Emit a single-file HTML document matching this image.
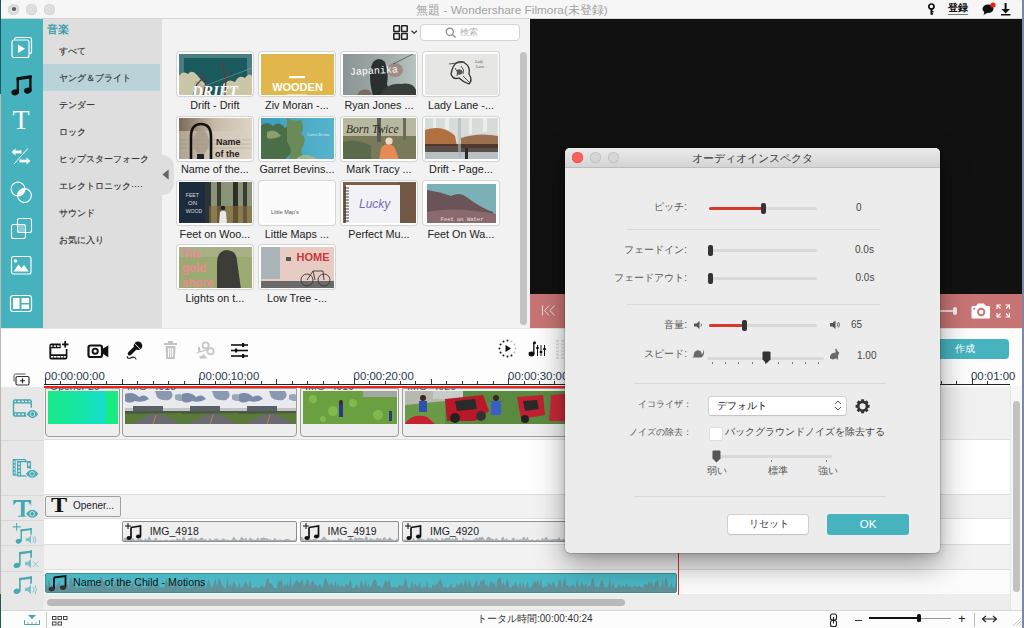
<!DOCTYPE html><html><head><meta charset="utf-8"><style>
*{box-sizing:border-box;margin:0;padding:0}
html,body{width:1024px;height:628px;overflow:hidden;background:#f0f0f0;font-family:"Liberation Sans",sans-serif}
.a{position:absolute}
svg{position:absolute;overflow:visible}
.cat{position:absolute;left:59px;font-size:9px;line-height:12px;color:#333;-webkit-text-stroke:0.15px #333;white-space:nowrap}
.th{position:absolute;width:76px;height:44px;border-radius:3px;background:#fff;box-shadow:0 0 0 1px #d4d4d4, 0 1px 1px rgba(0,0,0,0.08);overflow:hidden}
.th > div{position:absolute;left:1.5px;top:1.5px;width:73px;height:41px;overflow:hidden}
.lbl{position:absolute;width:82px;text-align:center;font-size:10.8px;line-height:12px;color:#222;white-space:nowrap}
.dl{position:absolute;font-size:10px;line-height:12px;color:#555;white-space:nowrap;text-align:right}
.dv{position:absolute;font-size:10px;line-height:12px;color:#444;white-space:nowrap}
.trk{position:absolute;left:44px;width:966px}
.hd{position:absolute;left:1px;width:43px;background:#e7e7e7}
.clip{position:absolute;background:#eeeeee;border:1px solid #9c9c9c;border-radius:0 0 4px 4px}
.aclip{position:absolute;background:#efefef;border:1px solid #8e8e8e;border-radius:2px;overflow:hidden}
.rl{position:absolute;top:371px;font-size:11.4px;line-height:11px;color:#2b3550;white-space:nowrap}
</style></head><body>
<div class="a" style="left:0;top:0;width:1px;height:94px;background:#1d5860"></div><div class="a" style="left:0;top:94px;width:1px;height:500px;background:#bdb8b4"></div><div class="a" style="left:0;top:594px;width:1px;height:34px;background:#1d5a50"></div>
<div class="a" style="left:1022px;top:0;width:2px;height:628px;background:#7e88a4"></div>
<div class="a" style="left:1px;top:0;width:1021px;height:19px;background:#f6f6f6;border-bottom:1px solid #d9d4d2;border-radius:5px 5px 0 0"></div>
<div class="a" style="left:8.0px;top:3.5px;width:11px;height:11px;border-radius:50%;background:#dedede;box-shadow:inset 0 0 0 0.6px #cfcfcf"></div>
<div class="a" style="left:26.0px;top:3.5px;width:11px;height:11px;border-radius:50%;background:#dedede;box-shadow:inset 0 0 0 0.6px #cfcfcf"></div>
<div class="a" style="left:44.0px;top:3.5px;width:11px;height:11px;border-radius:50%;background:#dedede;box-shadow:inset 0 0 0 0.6px #cfcfcf"></div>
<div class="a" style="left:11.5px;top:7px;width:4px;height:4px;border-radius:50%;background:#5a5a5a"></div>
<div class="a" style="left:312px;top:3.5px;width:400px;text-align:center;font-size:11.8px;line-height:13px;color:#a2a2a2">無題 - Wondershare Filmora(未登録)</div>
<svg style="left:926px;top:2px" width="12" height="14"><circle cx="5.4" cy="4.6" r="2.6" fill="none" stroke="#111" stroke-width="1.7"/><rect x="4.5" y="6.5" width="1.9" height="6.2" fill="#111"/><rect x="5" y="9" width="2.6" height="1.3" fill="#111"/><rect x="5" y="11.3" width="2.2" height="1.3" fill="#111"/></svg>
<div class="a" style="left:947.5px;top:2px;font-size:10px;line-height:11px;color:#111;font-weight:bold;border-bottom:1px solid #777;height:12.5px">登録</div>
<svg style="left:982px;top:3px" width="14" height="13"><ellipse cx="6" cy="5.8" rx="5.5" ry="4.3" fill="#111"/><path d="M2.5 8.5 L1.5 12 L6 9.5Z" fill="#111"/><circle cx="11" cy="2" r="2.6" fill="#f0201a"/></svg>
<svg style="left:1000px;top:2px" width="12" height="14"><rect x="4.6" y="1" width="2" height="7" fill="#111"/><path d="M1.5 7 L10 7 L5.6 11.5Z" fill="#111"/><rect x="1" y="12" width="9.5" height="1.5" fill="#111"/></svg>
<div class="a" style="left:1px;top:19px;width:42px;height:309px;background:#45b2be"></div>
<svg style="left:10px;top:36px" width="24" height="24"><rect x="4.5" y="1.5" width="17" height="16" rx="2" fill="none" stroke="#fff" stroke-width="1.2"/><rect x="2" y="4" width="17" height="17.5" rx="2" fill="#45b2be" stroke="#fff" stroke-width="1.2"/><path d="M8 8.5 L15 12.7 L8 17Z" fill="#fff"/></svg>
<svg style="left:10px;top:73px" width="24" height="24"><path d="M6.6 4.3 L21.6 2 L21.6 5.2 L6.6 7.5Z" fill="#111"/><rect x="6.6" y="5" width="2.4" height="14.5" fill="#111"/><rect x="19.2" y="3" width="2.4" height="14.5" fill="#111"/><ellipse cx="5.2" cy="19.3" rx="3.9" ry="3" transform="rotate(-15 5.2 19.3)" fill="#111"/><ellipse cx="17.8" cy="17.6" rx="3.9" ry="3" transform="rotate(-15 17.8 17.6)" fill="#111"/></svg>
<div class="a" style="left:10px;top:106px;width:22px;text-align:center;font-family:'Liberation Serif',serif;font-size:28px;line-height:28px;color:#fff">T</div>
<svg style="left:10px;top:146px" width="24" height="20"><path d="M1.5 6 L5.5 2.5 L5.5 4.8 L11.5 4.2 L11.5 7.6 L5.5 7.3 L5.5 9.5Z" fill="#fff"/><path d="M20.5 15 L16.5 18.5 L16.5 16.2 L9.5 16.6 L9.5 13.4 L16.5 13.7 L16.5 11.5Z" fill="#fff"/><line x1="4" y1="18" x2="18" y2="2.3" stroke="#fff" stroke-width="1"/></svg>
<svg style="left:9px;top:180px" width="26" height="24"><circle cx="9" cy="9" r="6.9" fill="none" stroke="#fff" stroke-width="1.1"/><circle cx="15.5" cy="15.5" r="6.9" fill="none" stroke="#fff" stroke-width="1.1"/><path d="M8.6 15.9 A6.9 6.9 0 0 1 15.9 8.6 A6.9 6.9 0 0 1 8.6 15.9Z" fill="#fff"/></svg>
<svg style="left:10px;top:217px" width="24" height="24"><rect x="7.5" y="1.5" width="14" height="14" rx="2" fill="none" stroke="#fff" stroke-width="1.1"/><rect x="1.5" y="7.5" width="14" height="14" rx="2" fill="none" stroke="#fff" stroke-width="1.1"/><rect x="7.5" y="7.5" width="8" height="8" fill="rgba(255,255,255,0.35)"/></svg>
<svg style="left:10px;top:255px" width="24" height="22"><rect x="1.5" y="1.5" width="19.5" height="17.5" rx="2" fill="none" stroke="#fff" stroke-width="1.2"/><circle cx="5.5" cy="6" r="1.7" fill="#fff"/><path d="M3.5 16.5 L8.5 9.5 L11.5 13 L14 10 L18.8 16.5Z" fill="#fff"/></svg>
<svg style="left:9px;top:294px" width="24" height="20"><rect x="1.5" y="1.5" width="21" height="16" rx="2.5" fill="none" stroke="#fff" stroke-width="1.2"/><rect x="4" y="4" width="6.5" height="11" fill="#fff"/><rect x="12.5" y="4" width="7.5" height="5" fill="#fff"/><rect x="12.5" y="10.5" width="7.5" height="4.5" fill="#fff"/></svg>
<div class="a" style="left:43px;top:19px;width:119px;height:309px;background:#dedede"></div>
<div class="a" style="left:43px;top:64px;width:117px;height:27px;background:#b9d3d8"></div>
<div class="a" style="left:47px;top:23px;font-size:10.5px;line-height:13px;color:#2e96a6;-webkit-text-stroke:0.3px #2e96a6">音楽</div>
<div class="cat" style="top:45px">すべて</div>
<div class="cat" style="top:72px">ヤング＆ブライト</div>
<div class="cat" style="top:99px">テンダー</div>
<div class="cat" style="top:126px">ロック</div>
<div class="cat" style="top:153px">ヒップスターフォーク</div>
<div class="cat" style="top:180px">エレクトロニック····</div>
<div class="cat" style="top:207px">サウンド</div>
<div class="cat" style="top:234px">お気に入り</div>
<div class="a" style="left:162px;top:19px;width:368px;height:309px;background:#f2f2f2"></div>
<div class="a" style="left:161px;top:155px;width:13px;height:40px;border-radius:0 12px 12px 0;background:#dedede"></div>
<svg style="left:162px;top:169px" width="8" height="12"><path d="M6.7 0.6 L0.4 5.6 L6.7 10.8Z" fill="#666"/></svg>
<svg style="left:392px;top:24px" width="28" height="18"><g fill="none" stroke="#222" stroke-width="1.5"><rect x="1.8" y="1.8" width="5.6" height="5.6" rx="0.5"/><rect x="9.6" y="1.8" width="5.6" height="5.6" rx="0.5"/><rect x="1.8" y="9.6" width="5.6" height="5.6" rx="0.5"/><rect x="9.6" y="9.6" width="5.6" height="5.6" rx="0.5"/></g><path d="M19.5 6.8 L22.2 9.3 L24.9 6.8" fill="none" stroke="#333" stroke-width="1.2"/></svg>
<div class="a" style="left:420px;top:24px;width:100px;height:17px;border-radius:4px;background:#fff;border:1px solid #d2d2d2"></div>
<svg style="left:445px;top:27px" width="12" height="12"><circle cx="4.8" cy="4.8" r="3.6" fill="none" stroke="#888" stroke-width="1.2"/><line x1="7.5" y1="7.5" x2="10.5" y2="10.5" stroke="#888" stroke-width="1.3"/></svg>
<div class="a" style="left:460px;top:27px;font-size:8.7px;line-height:11px;color:#b5b5b5">検索</div>
<div class="a" style="left:520px;top:52px;width:7px;height:273px;border-radius:4px;background:#c3c3c3"></div>
<div class="th" style="left:177.4px;top:52.3px"><div><svg width="73" height="42" style="left:0;top:0"><rect width="73" height="42" fill="#4a7f82"/><rect x="5" y="4" width="63" height="38" fill="#1b5a5f"/><path d="M0 22 Q4 16 9 20 Q13 15 18 21 Q22 26 26 30 L26 42 L0 42Z" fill="#c9c7a7"/><path d="M44 30 Q50 24 56 28 Q60 20 66 24 Q70 18 73 22 L73 42 L44 42Z" fill="#c9c7a7"/><path d="M16 26 Q24 30 28 36 L30 42 L14 42Z" fill="#b8b898"/><path d="M14 42 L18 30 L24 24 M24 42 L27 28 L22 18 M46 42 L47 26 L43 8 M47 28 L53 18" stroke="#5a3a3a" stroke-width="1.3" fill="none"/><line x1="20" y1="34" x2="73" y2="14" stroke="#8ab0b0" stroke-width="0.5"/><text x="36" y="41" text-anchor="middle" font-family="Liberation Serif" font-weight="bold" font-style="italic" font-size="15" fill="#fff" transform="scale(1,1.05)">DRIFT</text></svg></div></div>
<div class="lbl" style="left:173.9px;top:99.1px">Drift - Drift</div>
<div class="th" style="left:259.4px;top:52.3px"><div><svg width="73" height="42" style="left:0;top:0"><rect width="73" height="42" fill="#e1b74b"/><rect x="28" y="22" width="16" height="2.2" fill="#fff"/><text x="36.5" y="37" text-anchor="middle" font-family="Liberation Sans" font-weight="bold" font-size="11" fill="#fff">WOODEN</text><rect x="26" y="40" width="20" height="2" fill="#f4dca0"/></svg></div></div>
<div class="lbl" style="left:255.89999999999998px;top:99.1px">Ziv Moran -...</div>
<div class="th" style="left:341.4px;top:52.3px"><div><svg width="73" height="42" style="left:0;top:0"><defs><linearGradient id="g3" x1="0" x2="1"><stop offset="0" stop-color="#8a9494"/><stop offset="0.6" stop-color="#a0acaa"/><stop offset="1" stop-color="#b8c4c0"/></linearGradient></defs><rect width="73" height="42" fill="url(#g3)"/><path d="M30 42 Q24 20 30 8 Q36 2 42 8 Q46 18 44 30 L48 42Z" fill="#2a3030"/><ellipse cx="52" cy="16" rx="8" ry="7" fill="#a08a84"/><path d="M36 42 Q44 28 58 30 Q70 28 73 36 L73 42Z" fill="#3a3e3a"/><path d="M14 42 Q16 34 26 36 L30 42Z" fill="#7a6a60"/><line x1="50" y1="10" x2="70" y2="0" stroke="#333" stroke-width="0.6"/><text x="7" y="21" font-family="Liberation Mono" font-size="10" fill="#fff" transform="rotate(-3 7 21)">Japanika</text></svg></div></div>
<div class="lbl" style="left:337.9px;top:99.1px">Ryan Jones ...</div>
<div class="th" style="left:423.4px;top:52.3px"><div><svg width="73" height="42" style="left:0;top:0"><rect width="73" height="42" fill="#e6e6e4"/><path d="M27 16 Q30 6 38 8 Q46 12 44 20 Q48 26 44 30 Q38 28 34 24 Q28 26 26 20Z" fill="none" stroke="#333" stroke-width="1.3"/><path d="M30 14 Q34 18 32 22 M36 12 Q40 16 38 20 M38 22 L44 28 M24 10 L40 8" stroke="#444" stroke-width="0.9" fill="none"/><path d="M32 16 Q36 14 38 18 Q36 22 32 20Z" fill="#555"/><text x="50" y="9" font-size="4" fill="#555" font-family="Liberation Serif" font-style="italic">Lady</text><text x="51" y="14" font-size="4" fill="#555" font-family="Liberation Serif" font-style="italic">Lane</text></svg></div></div>
<div class="lbl" style="left:419.9px;top:99.1px">Lady Lane -...</div>
<div class="th" style="left:177.4px;top:116.6px"><div><svg width="73" height="42" style="left:0;top:0"><defs><linearGradient id="g5" x1="0" x2="1"><stop offset="0" stop-color="#7a6a58"/><stop offset="0.5" stop-color="#c8bca8"/><stop offset="1" stop-color="#ddd4c6"/></linearGradient></defs><rect width="73" height="42" fill="url(#g5)"/><rect x="0" y="13" width="73" height="29" fill="#d8d0c2" opacity="0.55"/><g stroke="#8a8070" stroke-width="0.4" opacity="0.7"><line x1="0" y1="22" x2="73" y2="22"/><line x1="0" y1="26" x2="73" y2="26"/><line x1="0" y1="30" x2="73" y2="30"/></g><path d="M12 42 L12 19 Q12 6 22 6 Q32 6 32 19 L32 42" fill="none" stroke="#111" stroke-width="2.6"/><ellipse cx="22" cy="24" rx="8" ry="12" fill="#a89a88" opacity="0.8"/><rect x="18" y="36" width="7" height="6" fill="#222"/><text x="37" y="27" font-family="Liberation Sans" font-weight="bold" font-size="9" fill="#2a1818">Name</text><text x="36" y="39" font-family="Liberation Sans" font-weight="bold" font-size="9" fill="#2a1818">of the</text></svg></div></div>
<div class="lbl" style="left:173.9px;top:163.39999999999998px">Name of the...</div>
<div class="th" style="left:259.4px;top:116.6px"><div><svg width="73" height="42" style="left:0;top:0"><defs><linearGradient id="g6" x1="0" x2="1"><stop offset="0" stop-color="#3a9ec0"/><stop offset="1" stop-color="#58b4cc"/></linearGradient></defs><rect width="73" height="42" fill="url(#g6)"/><path d="M0 8 Q6 2 12 8 Q18 2 24 10 Q30 4 34 12 Q30 18 36 22 Q30 28 34 34 Q26 38 24 42 L0 42Z" fill="#4a6e48"/><path d="M26 0 Q34 4 40 2 Q44 10 40 16 Q46 20 42 28 Q38 34 44 42 L28 42 Q32 30 26 24Z" fill="#6a8a58"/><path d="M6 14 Q14 10 20 18 Q12 22 6 20Z" fill="#8aa070"/><path d="M34 42 Q44 32 58 42Z" fill="#9ab890"/><text x="46" y="18" font-size="4" font-family="Liberation Serif" fill="#d8f0f8">Garret Bevins</text></svg></div></div>
<div class="lbl" style="left:255.89999999999998px;top:163.39999999999998px">Garret Bevins...</div>
<div class="th" style="left:341.4px;top:116.6px"><div><svg width="73" height="42" style="left:0;top:0"><rect width="73" height="42" fill="#b8b8a0"/><rect x="0" y="18" width="73" height="24" fill="#7a7a5a"/><path d="M0 24 Q14 20 28 28 L28 42 L0 42Z" fill="#5a6a4a"/><rect x="34" y="0" width="4" height="24" fill="#5a5a52"/><rect x="60" y="0" width="3" height="22" fill="#6a6a60"/><path d="M36 42 L38 30 Q45 22 52 30 L56 42Z" fill="#e88a58"/><circle cx="46" cy="23" r="3.6" fill="#f0d8c8"/><text x="3" y="15" font-family="Liberation Serif" font-style="italic" font-size="11.5" fill="#2a2a20">Born Twice</text></svg></div></div>
<div class="lbl" style="left:337.9px;top:163.39999999999998px">Mark Tracy ...</div>
<div class="th" style="left:423.4px;top:116.6px"><div><svg width="73" height="42" style="left:0;top:0"><rect width="73" height="42" fill="#d8dcd8"/><g fill="#f0f0f0" opacity="0.8"><rect x="8" y="0" width="3" height="14"/><rect x="20" y="0" width="4" height="12"/><rect x="44" y="0" width="3" height="16"/><rect x="58" y="0" width="4" height="14"/></g><path d="M0 12 Q18 6 30 18 L32 28 L0 28Z" fill="#b07040"/><path d="M36 20 Q54 14 73 18 L73 30 L36 30Z" fill="#9a7050"/><rect x="0" y="26" width="73" height="8" fill="#3a2a24" opacity="0.8"/><rect x="0" y="34" width="73" height="8" fill="#b8c0c4"/><rect x="33" y="0" width="3" height="42" fill="#a8b4c0" opacity="0.6"/><rect x="40" y="30" width="3" height="12" fill="#2a2a28"/></svg></div></div>
<div class="lbl" style="left:419.9px;top:163.39999999999998px">Drift - Page...</div>
<div class="th" style="left:177.4px;top:180.9px"><div><svg width="73" height="42" style="left:0;top:0"><rect width="73" height="42" fill="#8a9478"/><rect x="0" y="0" width="26" height="42" fill="#1c2c3e"/><rect x="26" y="0" width="6" height="42" fill="#2a3434"/><rect x="38" y="0" width="4" height="42" fill="#3a3a30"/><rect x="54" y="0" width="5" height="42" fill="#2e2e28"/><rect x="64" y="0" width="4" height="42" fill="#3a3a30"/><rect x="30" y="24" width="43" height="18" fill="#8a6a3a" opacity="0.6"/><path d="M40 42 L41 30 Q44 27 47 30 L48 42Z" fill="#e8e8e8"/><circle cx="44" cy="26" r="2.3" fill="#222"/><text x="8" y="15" font-family="Liberation Sans" font-size="6" fill="#ddd" transform="scale(0.85,1)">FEET</text><text x="9" y="23" font-size="6" font-family="Liberation Sans" fill="#ddd">ON</text><text x="8" y="31" font-size="6" font-family="Liberation Sans" fill="#ddd" transform="scale(0.85,1)">WOOD</text></svg></div></div>
<div class="lbl" style="left:173.9px;top:227.7px">Feet on Woo...</div>
<div class="th" style="left:259.4px;top:180.9px"><div><svg width="73" height="42" style="left:0;top:0"><rect width="73" height="42" fill="#fbfbfb"/><text x="10" y="32" font-family="Liberation Sans" font-size="5.5" fill="#555">Little Map's</text></svg></div></div>
<div class="lbl" style="left:255.89999999999998px;top:227.7px">Little Maps ...</div>
<div class="th" style="left:341.4px;top:180.9px"><div><svg width="73" height="42" style="left:0;top:0"><rect width="73" height="42" fill="#7a5e48"/><rect x="55" y="0" width="18" height="42" fill="#6a5040" opacity="0.5"/><rect x="3" y="3" width="54" height="39" fill="#f2f2f6"/><g stroke="#333" stroke-width="0.9"><line x1="1" y1="6" x2="6" y2="6"/><line x1="1" y1="9" x2="6" y2="9"/><line x1="1" y1="12" x2="6" y2="12"/><line x1="1" y1="15" x2="6" y2="15"/><line x1="1" y1="18" x2="6" y2="18"/><line x1="1" y1="21" x2="6" y2="21"/><line x1="1" y1="24" x2="6" y2="24"/><line x1="1" y1="27" x2="6" y2="27"/><line x1="1" y1="30" x2="6" y2="30"/><line x1="1" y1="33" x2="6" y2="33"/><line x1="1" y1="36" x2="6" y2="36"/><line x1="1" y1="39" x2="6" y2="39"/></g><text x="16" y="26" font-family="Liberation Sans" font-style="italic" font-size="12" fill="#7a68c0">Lucky</text></svg></div></div>
<div class="lbl" style="left:337.9px;top:227.7px">Perfect Mu...</div>
<div class="th" style="left:423.4px;top:180.9px"><div><svg width="73" height="42" style="left:0;top:0"><rect width="73" height="42" fill="#fff"/><rect x="2" y="2" width="69" height="40" fill="#7ab0b6"/><path d="M2 8 Q16 10 26 14 Q34 10 40 14 Q56 26 68 30 L71 42 L2 42Z" fill="#6a5458"/><path d="M2 30 Q30 24 71 32 L71 42 L2 42Z" fill="#8a6a6e"/><text x="37" y="39" text-anchor="middle" font-family="Liberation Mono" font-size="5.5" fill="#e8e0e0">Feet on Water</text></svg></div></div>
<div class="lbl" style="left:419.9px;top:227.7px">Feet On Wa...</div>
<div class="th" style="left:177.4px;top:245.2px"><div><svg width="73" height="42" style="left:0;top:0"><rect width="73" height="42" fill="#9aaa70"/><rect x="0" y="0" width="73" height="10" fill="#a8b088"/><path d="M38 42 L38 16 Q38 4 48 3 Q58 4 58 14 L62 42Z" fill="#3c3c38"/><g font-family="Liberation Sans" font-weight="bold" fill="#e88a90" transform="scale(0.9,1)"><text x="3" y="11" font-size="12">The</text><text x="3" y="25" font-size="13">gold</text><text x="3" y="40" font-size="13">shore</text></g></svg></div></div>
<div class="lbl" style="left:173.9px;top:292.0px">Lights on t...</div>
<div class="th" style="left:259.4px;top:245.2px"><div><svg width="73" height="42" style="left:0;top:0"><rect width="73" height="42" fill="#e8ccc4"/><rect x="0" y="0" width="19" height="32" fill="#a8b4b8"/><rect x="0" y="34" width="73" height="8" fill="#6a6a6a"/><text x="52" y="14" text-anchor="middle" font-family="Liberation Sans" font-weight="bold" font-size="11" fill="#c83838">HOME</text><circle cx="46" cy="33" r="6" fill="none" stroke="#333" stroke-width="0.9"/><circle cx="63" cy="33" r="6" fill="none" stroke="#333" stroke-width="0.9"/><path d="M46 33 L52 24 L62 24 L63 33 M52 24 L54 33" stroke="#333" stroke-width="0.9" fill="none"/><rect x="25" y="10" width="5" height="4" fill="#555"/></svg></div></div>
<div class="lbl" style="left:255.89999999999998px;top:292.0px">Low Tree -...</div>
<div class="a" style="left:530px;top:19px;width:492px;height:275px;background:#111"></div>
<div class="a" style="left:530px;top:294px;width:492px;height:34px;background:#c87474"></div>
<svg style="left:540px;top:304px" width="18" height="14"><line x1="2.5" y1="1.5" x2="2.5" y2="11.5" stroke="#ecdede" stroke-width="1"/><path d="M9 1.5 L4.5 6.5 L9 11.5 M14.5 1.5 L10 6.5 L14.5 11.5" fill="none" stroke="#ecdede" stroke-width="1"/></svg>
<div class="a" style="left:930px;top:310px;width:24px;height:1.6px;background:#e8dcdc"></div>
<div class="a" style="left:952.5px;top:307px;width:4.5px;height:8px;border-radius:2px;background:#eee"></div>
<svg style="left:970px;top:302px" width="22" height="18"><path d="M1.5 5 Q1.5 4 2.5 4 L6 4 L8 1.5 L14 1.5 L16 4 L19 4 Q20 4 20 5 L20 15.5 Q20 16.5 19 16.5 L2.5 16.5 Q1.5 16.5 1.5 15.5Z" fill="#fff"/><circle cx="11.2" cy="10" r="4.2" fill="#c87474"/><circle cx="11.2" cy="10" r="2.2" fill="#fff"/><circle cx="4.3" cy="6.8" r="1" fill="#c87474"/></svg>
<svg style="left:996px;top:304px" width="15" height="14"><g stroke="#fff" stroke-width="1.1" fill="none"><path d="M1 5 L1 1 L5 1 M1 1 L4.5 4.5"/><path d="M13.5 5 L13.5 1 L9.5 1 M13.5 1 L10 4.5"/><path d="M1 9 L1 13 L5 13 M1 13 L4.5 9.5"/><path d="M13.5 9 L13.5 13 L9.5 13 M13.5 13 L10 9.5"/></g></svg>
<div class="a" style="left:1px;top:328px;width:1021px;height:43px;background:#fdfdfd;border-top:1px solid #e6e6e6"></div>
<svg style="left:44px;top:336px" width="30" height="28"><path d="M5.35 9.6 Q5.35 7.6 7.35 7.6 L16.7 7.6 L16.7 12.3 L7.3 12.3 L7.3 18.3 L21.8 18.3 L21.8 13 L23.4 13 L23.4 21.4 Q23.4 23.4 21.4 23.4 L7.35 23.4 Q5.35 23.4 5.35 21.4Z" fill="#111"/><rect x="6.7" y="9.4" width="1.8" height="1.5" fill="#fff"/><rect x="9.8" y="9.4" width="2.2" height="1.5" fill="#fff"/><rect x="12.9" y="9.4" width="2.7" height="1.5" fill="#fff"/><rect x="6.9" y="20" width="2.1" height="1.6" fill="#fff"/><rect x="9.6" y="20" width="3" height="1.6" fill="#fff"/><rect x="13.2" y="20" width="3" height="1.6" fill="#fff"/><rect x="16.8" y="20" width="2.6" height="1.6" fill="#fff"/><rect x="20" y="20" width="1.8" height="1.6" fill="#fff"/><path d="M21.2 5 L21.2 11.6 M18 8.4 L24.5 8.4" stroke="#111" stroke-width="1.8"/></svg>
<svg style="left:86px;top:342px" width="24" height="18"><rect x="2.5" y="3.5" width="13.5" height="11.5" rx="2" fill="none" stroke="#111" stroke-width="2.2"/><circle cx="9.2" cy="9.2" r="2.6" fill="none" stroke="#111" stroke-width="1.9"/><path d="M16 7.2 L22.3 3.3 L22.3 15.2 L16 11.3Z" fill="#111"/></svg>
<svg style="left:122px;top:336px" width="30" height="28"><circle cx="16" cy="9.8" r="4.3" fill="#111"/><line x1="12.3" y1="7.2" x2="18.6" y2="13.5" stroke="#fff" stroke-width="0.9"/><line x1="7.6" y1="17.6" x2="12.4" y2="12.8" stroke="#111" stroke-width="3.8" stroke-linecap="round"/><path d="M5.3 20.2 Q5 22.8 8 22.2 Q10.5 21 12.2 21.2 Q13.6 21.6 14.2 23.4" fill="none" stroke="#111" stroke-width="1.1"/></svg>
<svg style="left:162px;top:340px" width="18" height="22"><rect x="2" y="3" width="13" height="2" fill="#c4c4c4"/><rect x="6" y="1" width="5" height="2" fill="#c4c4c4"/><path d="M3.5 6 L13.5 6 L12.8 19 L4.2 19Z" fill="#c4c4c4"/><g fill="#fdfdfd"><rect x="6" y="8" width="1.1" height="9"/><rect x="8" y="8" width="1.1" height="9"/><rect x="10" y="8" width="1.1" height="9"/></g></svg>
<svg style="left:190px;top:336px" width="30" height="28"><circle cx="15.6" cy="9.4" r="3" fill="none" stroke="#c6c6c6" stroke-width="1.8"/><circle cx="20.6" cy="15.3" r="3.1" fill="none" stroke="#c6c6c6" stroke-width="1.8"/><path d="M5 17.4 L8.3 15.6 L8 10.8 L10 11.2 L10.6 15 L17.6 13.2 L17.8 14.6 Z" fill="#c6c6c6"/><path d="M13.6 17.4 L12.5 19.5 L9.2 20.4 L10.2 22.8 L17.8 22.2 L15.5 20.4Z" fill="#c6c6c6"/></svg>
<svg style="left:229px;top:342px" width="22" height="17"><g stroke="#111" stroke-width="1.6"><line x1="2" y1="3" x2="19" y2="3"/><line x1="2" y1="8.5" x2="19" y2="8.5"/><line x1="2" y1="14" x2="19" y2="14"/></g><g fill="#111"><rect x="13" y="1" width="2.2" height="4"/><rect x="6" y="6.5" width="2.2" height="4"/><rect x="13" y="12" width="2.2" height="4"/></g></svg>
<svg style="left:498px;top:339px" width="20" height="20"><circle cx="17.5" cy="9.5" r="0.95" fill="#bbb"/><circle cx="16.428204999334696" cy="13.499996935898047" r="0.95" fill="#bbb"/><circle cx="13.500006128201562" cy="16.428199692153072" r="0.95" fill="#111"/><circle cx="9.500010614359175" cy="17.49999999999296" r="0.95" fill="#111"/><circle cx="5.5000122564125125" cy="16.428210306504116" r="0.95" fill="#111"/><circle cx="2.5718056150407405" cy="13.500015320498033" r="0.95" fill="#111"/><circle cx="1.500000000028166" cy="9.500021228718351" r="0.95" fill="#111"/><circle cx="2.5717843863386554" cy="5.500021448730111" r="0.95" fill="#111"/><circle cx="5.49997548721253" cy="2.5718109222467547" r="0.95" fill="#111"/><circle cx="9.499968156922483" cy="1.5000000000633742" r="0.95" fill="#111"/><circle cx="13.499969358945252" cy="2.571779079193627" r="0.95" fill="#bbb"/><circle cx="16.42818377053504" cy="5.499966294930143" r="0.95" fill="#bbb"/><path d="M7.5 6 L13 9.5 L7.5 13Z" fill="#111"/></svg>
<svg style="left:528px;top:341px" width="20" height="17"><ellipse cx="3.5" cy="13" rx="3" ry="2.4" fill="#111"/><path d="M5.8 13 L5.8 2" stroke="#111" stroke-width="1.3"/><circle cx="6.5" cy="1.8" r="1.5" fill="#111"/><g stroke="#111" stroke-width="1"><line x1="9.5" y1="4" x2="9.5" y2="15"/><line x1="13" y1="4" x2="13" y2="15"/><line x1="16.5" y1="4" x2="16.5" y2="15"/></g><g fill="#111"><rect x="8.2" y="6" width="2.6" height="2"/><rect x="11.7" y="10" width="2.6" height="2"/><rect x="15.2" y="7" width="2.6" height="2"/></g></svg>
<svg style="left:555px;top:339px" width="10" height="20"><g fill="#e2e2e2"><rect x="1" y="1.0" width="3" height="2"/><rect x="6" y="1.0" width="3" height="2"/><rect x="1" y="4.4" width="3" height="2"/><rect x="6" y="4.4" width="3" height="2"/><rect x="1" y="7.8" width="3" height="2"/><rect x="6" y="7.8" width="3" height="2"/><rect x="1" y="11.2" width="3" height="2"/><rect x="6" y="11.2" width="3" height="2"/><rect x="1" y="14.6" width="3" height="2"/><rect x="6" y="14.6" width="3" height="2"/><rect x="1" y="18.0" width="3" height="2"/><rect x="6" y="18.0" width="3" height="2"/></g></svg>
<div class="a" style="left:900px;top:339px;width:109px;height:20px;border-radius:4px;background:#46b3bf"></div>
<div class="a" style="left:945px;top:342px;width:40px;text-align:center;font-size:10px;line-height:13px;color:#fff">作成</div>
<div class="a" style="left:1px;top:371px;width:1021px;height:16px;background:#fdfdfd"></div>
<svg style="left:12px;top:372px" width="20" height="14"><path d="M2 9.5 L2 3.5 Q2 2 3.5 2 L13.5 2" fill="none" stroke="#555" stroke-width="1"/><rect x="4" y="4.5" width="13" height="8.5" rx="1.5" fill="#fdfdfd" stroke="#333" stroke-width="1.2"/><path d="M10.5 6.2 L10.5 11.2 M8 8.7 L13 8.7" stroke="#222" stroke-width="1.1"/></svg>
<div class="a" style="left:44px;top:384px;width:966px;height:1px;background:#222"></div>
<div class="a" style="left:44.6px;top:378px;width:1px;height:6px;background:#333"></div><div class="a" style="left:60.0px;top:381px;width:1px;height:3px;background:#333"></div><div class="a" style="left:75.5px;top:381px;width:1px;height:3px;background:#333"></div><div class="a" style="left:90.9px;top:381px;width:1px;height:3px;background:#333"></div><div class="a" style="left:106.4px;top:381px;width:1px;height:3px;background:#333"></div><div class="a" style="left:121.8px;top:379px;width:1px;height:5px;background:#333"></div><div class="a" style="left:137.3px;top:381px;width:1px;height:3px;background:#333"></div><div class="a" style="left:152.8px;top:381px;width:1px;height:3px;background:#333"></div><div class="a" style="left:168.2px;top:381px;width:1px;height:3px;background:#333"></div><div class="a" style="left:183.6px;top:381px;width:1px;height:3px;background:#333"></div><div class="a" style="left:199.1px;top:378px;width:1px;height:6px;background:#333"></div><div class="a" style="left:214.5px;top:381px;width:1px;height:3px;background:#333"></div><div class="a" style="left:230.0px;top:381px;width:1px;height:3px;background:#333"></div><div class="a" style="left:245.4px;top:381px;width:1px;height:3px;background:#333"></div><div class="a" style="left:260.9px;top:381px;width:1px;height:3px;background:#333"></div><div class="a" style="left:276.4px;top:379px;width:1px;height:5px;background:#333"></div><div class="a" style="left:291.8px;top:381px;width:1px;height:3px;background:#333"></div><div class="a" style="left:307.2px;top:381px;width:1px;height:3px;background:#333"></div><div class="a" style="left:322.7px;top:381px;width:1px;height:3px;background:#333"></div><div class="a" style="left:338.2px;top:381px;width:1px;height:3px;background:#333"></div><div class="a" style="left:353.6px;top:378px;width:1px;height:6px;background:#333"></div><div class="a" style="left:369.1px;top:381px;width:1px;height:3px;background:#333"></div><div class="a" style="left:384.5px;top:381px;width:1px;height:3px;background:#333"></div><div class="a" style="left:399.9px;top:381px;width:1px;height:3px;background:#333"></div><div class="a" style="left:415.4px;top:381px;width:1px;height:3px;background:#333"></div><div class="a" style="left:430.9px;top:379px;width:1px;height:5px;background:#333"></div><div class="a" style="left:446.3px;top:381px;width:1px;height:3px;background:#333"></div><div class="a" style="left:461.8px;top:381px;width:1px;height:3px;background:#333"></div><div class="a" style="left:477.2px;top:381px;width:1px;height:3px;background:#333"></div><div class="a" style="left:492.6px;top:381px;width:1px;height:3px;background:#333"></div><div class="a" style="left:508.1px;top:378px;width:1px;height:6px;background:#333"></div><div class="a" style="left:523.5px;top:381px;width:1px;height:3px;background:#333"></div><div class="a" style="left:539.0px;top:381px;width:1px;height:3px;background:#333"></div><div class="a" style="left:554.4px;top:381px;width:1px;height:3px;background:#333"></div><div class="a" style="left:569.9px;top:381px;width:1px;height:3px;background:#333"></div><div class="a" style="left:585.4px;top:379px;width:1px;height:5px;background:#333"></div><div class="a" style="left:600.8px;top:381px;width:1px;height:3px;background:#333"></div><div class="a" style="left:616.2px;top:381px;width:1px;height:3px;background:#333"></div><div class="a" style="left:631.7px;top:381px;width:1px;height:3px;background:#333"></div><div class="a" style="left:647.1px;top:381px;width:1px;height:3px;background:#333"></div><div class="a" style="left:662.6px;top:378px;width:1px;height:6px;background:#333"></div><div class="a" style="left:678.0px;top:381px;width:1px;height:3px;background:#333"></div><div class="a" style="left:693.5px;top:381px;width:1px;height:3px;background:#333"></div><div class="a" style="left:709.0px;top:381px;width:1px;height:3px;background:#333"></div><div class="a" style="left:724.4px;top:381px;width:1px;height:3px;background:#333"></div><div class="a" style="left:739.9px;top:379px;width:1px;height:5px;background:#333"></div><div class="a" style="left:755.3px;top:381px;width:1px;height:3px;background:#333"></div><div class="a" style="left:770.8px;top:381px;width:1px;height:3px;background:#333"></div><div class="a" style="left:786.2px;top:381px;width:1px;height:3px;background:#333"></div><div class="a" style="left:801.6px;top:381px;width:1px;height:3px;background:#333"></div><div class="a" style="left:817.1px;top:378px;width:1px;height:6px;background:#333"></div><div class="a" style="left:832.5px;top:381px;width:1px;height:3px;background:#333"></div><div class="a" style="left:848.0px;top:381px;width:1px;height:3px;background:#333"></div><div class="a" style="left:863.4px;top:381px;width:1px;height:3px;background:#333"></div><div class="a" style="left:878.9px;top:381px;width:1px;height:3px;background:#333"></div><div class="a" style="left:894.4px;top:379px;width:1px;height:5px;background:#333"></div><div class="a" style="left:909.8px;top:381px;width:1px;height:3px;background:#333"></div><div class="a" style="left:925.2px;top:381px;width:1px;height:3px;background:#333"></div><div class="a" style="left:940.7px;top:381px;width:1px;height:3px;background:#333"></div><div class="a" style="left:956.1px;top:381px;width:1px;height:3px;background:#333"></div><div class="a" style="left:971.6px;top:378px;width:1px;height:6px;background:#333"></div><div class="a" style="left:987.0px;top:381px;width:1px;height:3px;background:#333"></div>
<div class="rl" style="left:44.6px">00:00:00:00</div>
<div class="rl" style="left:199.1px">00:00:10:00</div>
<div class="rl" style="left:353.6px">00:00:20:00</div>
<div class="rl" style="left:508.1px">00:00:30:00</div>
<div class="rl" style="left:662.6px">00:00:40:00</div>
<div class="rl" style="left:817.1px">00:00:50:00</div>
<div class="rl" style="left:971px">00:01:00</div>
<div class="a" style="left:44px;top:387px;width:966px;height:52.0px;background:#f1f1f1;"></div>
<div class="a" style="left:44px;top:439px;width:966px;height:54.5px;background:#fefefe;border-top:1px solid #dedede"></div>
<div class="a" style="left:44px;top:493.5px;width:966px;height:24.8px;background:#f2f2f2;border-top:1px solid #dedede"></div>
<div class="a" style="left:44px;top:518.3px;width:966px;height:25.7px;background:#fefefe;border-top:1px solid #dedede"></div>
<div class="a" style="left:44px;top:544px;width:966px;height:25.4px;background:#f2f2f2;border-top:1px solid #dedede"></div>
<div class="a" style="left:44px;top:569.4px;width:966px;height:24.6px;background:#fcfcfc;border-top:1px solid #dedede"></div>
<div class="a" style="left:44px;top:594px;width:966px;height:16.0px;background:#ededed;"></div>
<div class="hd" style="top:387px;height:223px"></div>
<div class="a" style="left:1px;top:439.5px;width:43px;height:1px;background:#d8d8d8"></div>
<div class="a" style="left:1px;top:494.5px;width:43px;height:1px;background:#d8d8d8"></div>
<div class="a" style="left:1px;top:519.7px;width:43px;height:1px;background:#d8d8d8"></div>
<div class="a" style="left:1px;top:544.7px;width:43px;height:1px;background:#d8d8d8"></div>
<div class="a" style="left:1px;top:570.9px;width:43px;height:1px;background:#d8d8d8"></div>
<div class="a" style="left:1010px;top:386px;width:12px;height:224px;background:#f7f7f7;border-left:1px solid #e6e6e6"></div>
<div class="a" style="left:1013px;top:401px;width:7px;height:191px;border-radius:4px;background:#c2c2c2"></div>
<div class="a" style="left:47px;top:598.5px;width:578px;height:7.5px;border-radius:4px;background:#b9b9b9"></div>
<svg style="left:8px;top:394px" width="36" height="30"><path d="M4.8 7.3 Q4.8 5.3 6.8 5.3 L21.9 5.3 Q23.9 5.3 23.9 7.3 L23.9 13.8 L22.5 13.8 L22.5 9.6 L6.2 9.6 L6.2 18.2 L18.5 18.2 L18.5 22.7 L6.8 22.7 Q4.8 22.7 4.8 20.7Z" fill="#45a9b3"/><rect x="6.4" y="6.7" width="1.5" height="1.5" fill="#e7e7e7"/><rect x="9.6" y="6.7" width="2.3" height="1.5" fill="#e7e7e7"/><rect x="13.4" y="6.7" width="2.4" height="1.5" fill="#e7e7e7"/><rect x="17" y="6.7" width="1.9" height="1.5" fill="#e7e7e7"/><rect x="20.3" y="6.7" width="2.1" height="1.5" fill="#e7e7e7"/><rect x="6.8" y="19.6" width="1.6" height="1.6" fill="#e7e7e7"/><rect x="9.9" y="19.6" width="2.3" height="1.6" fill="#e7e7e7"/><rect x="13.6" y="19.6" width="2.4" height="1.6" fill="#e7e7e7"/><path d="M18.0 20.1 Q24.4 10.9 30.8 20.1 Q24.4 29.3 18.0 20.1Z" fill="#45a9b3" stroke="#e7e7e7" stroke-width="1.1"/><circle cx="24.4" cy="20.1" r="2.3" fill="none" stroke="#e7e7e7" stroke-width="0.9"/></svg>
<svg style="left:8px;top:454px" width="36" height="30"><rect x="5.4" y="5.6" width="12.3" height="15.2" rx="0.8" fill="none" stroke="#45a9b3" stroke-width="1.2"/><rect x="4.8" y="5" width="2.8" height="16.4" fill="#45a9b3"/><rect x="5.7" y="7" width="1" height="2" fill="#e7e7e7"/><rect x="5.7" y="10.5" width="1" height="2" fill="#e7e7e7"/><rect x="5.7" y="14" width="1" height="2" fill="#e7e7e7"/><rect x="5.7" y="17.5" width="1" height="2" fill="#e7e7e7"/><rect x="9.7" y="7.6" width="12.6" height="14.2" rx="0.8" fill="#e7e7e7" stroke="#45a9b3" stroke-width="1.2"/><rect x="9.1" y="7" width="3.9" height="15.4" fill="#45a9b3"/><rect x="19" y="7" width="3.9" height="7.2" fill="#45a9b3"/><rect x="10.3" y="8.6" width="1.6" height="2.1" fill="#e7e7e7"/><rect x="10.3" y="12.2" width="1.6" height="2.1" fill="#e7e7e7"/><rect x="10.3" y="15.8" width="1.6" height="2.1" fill="#e7e7e7"/><rect x="10.3" y="19.2" width="1.6" height="2.1" fill="#e7e7e7"/><rect x="20.2" y="8.8" width="1.6" height="3.4" fill="#e7e7e7"/><path d="M17.2 19.8 Q24.1 10.6 31.0 19.8 Q24.1 29.0 17.2 19.8Z" fill="#45a9b3" stroke="#e7e7e7" stroke-width="1.1"/><circle cx="24.1" cy="19.8" r="2.3" fill="none" stroke="#e7e7e7" stroke-width="0.9"/></svg>
<svg style="left:8px;top:494px" width="36" height="30"><path d="M5.3 6 L23.2 6 L23.2 11.6 L20.2 8.1 L16.7 8.1 L16.7 21.8 L17.9 21.8 L17.9 22.8 L10 22.8 L10 21.8 L12.9 21.8 L12.9 8.1 L8.3 8.1 L5.3 11.6Z" fill="#45a9b3"/><path d="M17.4 19.8 Q24.2 10.6 31.0 19.8 Q24.2 29.0 17.4 19.8Z" fill="#45a9b3" stroke="#e7e7e7" stroke-width="1.1"/><circle cx="24.2" cy="19.8" r="2.3" fill="none" stroke="#e7e7e7" stroke-width="0.9"/></svg>
<svg style="left:0;top:515px" width="44" height="90"><path d="M16.6 8 L16.6 15.7 M12.8 11.9 L20.9 11.9" stroke="#45a9b3" stroke-width="1.2" opacity="0.85"/><g transform="translate(18.6,26.2) scale(0.88)"><ellipse cx="0" cy="0" rx="3.3" ry="2.6" transform="rotate(-18)" fill="#45a9b3"/><rect x="2.2" y="-13.4" width="1.6" height="13.4" fill="#45a9b3"/><path d="M2.2 -13.4 L15 -15 L15 -12.6 L2.2 -11Z" fill="#45a9b3"/><rect x="13.4" y="-15" width="1.6" height="10" fill="#45a9b3"/><path d="M7.6 -4 L10.8 -4 L14.6 -7.4 L14.6 3.6 L10.8 0.3 L7.6 0.3Z" fill="#7cc0c8" stroke="#e7e7e7" stroke-width="1"/><path d="M16.2 -4.4 Q18.2 -1.8 16.2 1.2 M18.2 -6 Q21 -1.8 18.2 2.8" fill="none" stroke="#7cc0c8" stroke-width="1"/></g><g transform="translate(16.9,50.4) scale(1)"><ellipse cx="0" cy="0" rx="3.3" ry="2.6" transform="rotate(-18)" fill="#45a9b3"/><rect x="2.2" y="-13.4" width="1.6" height="13.4" fill="#45a9b3"/><path d="M2.2 -13.4 L15 -15 L15 -12.6 L2.2 -11Z" fill="#45a9b3"/><rect x="13.4" y="-15" width="1.6" height="10" fill="#45a9b3"/><path d="M7.6 -4 L10.8 -4 L14.6 -7.4 L14.6 3.6 L10.8 0.3 L7.6 0.3Z" fill="#7cc0c8" stroke="#e7e7e7" stroke-width="1"/><path d="M16 -4 L21.5 1.5 M21.5 -4 L16 1.5" stroke="#8cc8d0" stroke-width="1"/></g><g transform="translate(16.9,76.3) scale(1)"><ellipse cx="0" cy="0" rx="3.3" ry="2.6" transform="rotate(-18)" fill="#45a9b3"/><rect x="2.2" y="-13.4" width="1.6" height="13.4" fill="#45a9b3"/><path d="M2.2 -13.4 L15 -15 L15 -12.6 L2.2 -11Z" fill="#45a9b3"/><rect x="13.4" y="-15" width="1.6" height="10" fill="#45a9b3"/><path d="M7.6 -4 L10.8 -4 L14.6 -7.4 L14.6 3.6 L10.8 0.3 L7.6 0.3Z" fill="#7cc0c8" stroke="#e7e7e7" stroke-width="1"/><path d="M16.2 -4.4 Q18.2 -1.8 16.2 1.2 M18.2 -6 Q21 -1.8 18.2 2.8" fill="none" stroke="#7cc0c8" stroke-width="1"/></g></svg>
<div class="clip" style="left:44.6px;top:388px;width:75.4px;height:48.5px"></div>
<div class="clip" style="left:121.7px;top:388px;width:175.8px;height:48.5px"></div>
<div class="clip" style="left:299.6px;top:388px;width:99.8px;height:48.5px"></div>
<div class="clip" style="left:402px;top:388px;width:398.0px;height:48.5px"></div>
<div class="a" style="left:48px;top:391px;width:70px;height:33px;background:linear-gradient(90deg,#18e886 0%,#14e4a8 50%,#16dcd0 82%,#18ec80 82.5%)"></div>
<svg style="left:125px;top:391px" width="57" height="33"><rect width="57" height="33" fill="#e8eaee"/><path d="M0 3 Q8 0 14 6 Q20 2 24 8 Q18 12 10 10 Q4 13 0 10Z" fill="#7a8aa8"/><path d="M30 0 L46 0 Q50 6 44 9 Q36 10 32 6Z" fill="#8a98b0"/><path d="M50 4 Q55 2 57 4 L57 10 Q52 10 50 8Z" fill="#9aa6ba"/><rect x="0" y="17" width="57" height="3" fill="#c0c4c8"/><rect x="8" y="15" width="30" height="6" fill="#5a6068"/><rect x="0" y="20" width="57" height="3" fill="#4a5a40"/><path d="M0 33 L0 23 L57 22 L57 33Z" fill="#5a7a3a"/><path d="M6 33 L26 23 L36 23 L56 33Z" fill="#6a6a70"/><path d="M28 33 L31 24" stroke="#d88a30" stroke-width="0.8"/></svg>
<svg style="left:182px;top:391px" width="57" height="33"><rect width="57" height="33" fill="#e8eaee"/><path d="M0 3 Q8 0 14 6 Q20 2 24 8 Q18 12 10 10 Q4 13 0 10Z" fill="#7a8aa8"/><path d="M30 0 L46 0 Q50 6 44 9 Q36 10 32 6Z" fill="#8a98b0"/><path d="M50 4 Q55 2 57 4 L57 10 Q52 10 50 8Z" fill="#9aa6ba"/><rect x="0" y="17" width="57" height="3" fill="#c0c4c8"/><rect x="8" y="15" width="30" height="6" fill="#5a6068"/><rect x="0" y="20" width="57" height="3" fill="#4a5a40"/><path d="M0 33 L0 23 L57 22 L57 33Z" fill="#5a7a3a"/><path d="M6 33 L26 23 L36 23 L56 33Z" fill="#6a6a70"/><path d="M28 33 L31 24" stroke="#d88a30" stroke-width="0.8"/></svg>
<svg style="left:239px;top:391px" width="57" height="33"><rect width="57" height="33" fill="#e8eaee"/><path d="M0 3 Q8 0 14 6 Q20 2 24 8 Q18 12 10 10 Q4 13 0 10Z" fill="#7a8aa8"/><path d="M30 0 L46 0 Q50 6 44 9 Q36 10 32 6Z" fill="#8a98b0"/><path d="M50 4 Q55 2 57 4 L57 10 Q52 10 50 8Z" fill="#9aa6ba"/><rect x="0" y="17" width="57" height="3" fill="#c0c4c8"/><rect x="8" y="15" width="30" height="6" fill="#5a6068"/><rect x="0" y="20" width="57" height="3" fill="#4a5a40"/><path d="M0 33 L0 23 L57 22 L57 33Z" fill="#5a7a3a"/><path d="M6 33 L26 23 L36 23 L56 33Z" fill="#6a6a70"/><path d="M28 33 L31 24" stroke="#d88a30" stroke-width="0.8"/></svg>
<svg style="left:303px;top:391px" width="94" height="33"><rect width="94" height="33" fill="#6aa040"/><rect x="60" y="0" width="34" height="6" fill="#a0a8a0"/><g fill="#8ac050" opacity="0.8"><circle cx="10" cy="8" r="4"/><circle cx="30" cy="20" r="5"/><circle cx="50" cy="12" r="4"/><circle cx="75" cy="24" r="5"/><circle cx="20" cy="28" r="3"/></g><rect x="36" y="12" width="4" height="14" fill="#2a3a80"/><circle cx="38" cy="11" r="2" fill="#3a2a20"/><rect x="86" y="20" width="3" height="10" fill="#2a3a80"/></svg>
<svg style="left:405px;top:391px" width="160" height="33"><rect width="160" height="33" fill="#5a8a40"/><rect x="0" y="0" width="40" height="14" fill="#b8b8b0"/><path d="M0 14 L40 10 L40 33 L0 33Z" fill="#6a9a48"/><rect x="28" y="0" width="30" height="8" fill="#c8ccc8"/><path d="M2 30 Q10 22 22 26 L30 33 L0 33Z" fill="#c82030"/><path d="M40 8 L78 4 L84 20 L70 30 L42 30Z" fill="#b81828"/><path d="M50 10 L70 8 L72 18 L52 20Z" fill="#2a2a2a"/><circle cx="50" cy="27" r="5" fill="#222"/><circle cx="76" cy="25" r="5" fill="#333"/><rect x="14" y="10" width="8" height="11" fill="#3050b0"/><circle cx="18" cy="7" r="3" fill="#3a2820"/><rect x="86" y="10" width="10" height="14" fill="#3a60c8"/><circle cx="91" cy="7" r="3" fill="#3a2820"/><path d="M112 6 L138 4 L140 24 L116 28Z" fill="#c02030"/><path d="M118 10 L132 9 L134 18 L120 20Z" fill="#2a2a2a"/><circle cx="120" cy="28" r="4" fill="#222"/><path d="M146 4 L160 3 L160 30 L144 30Z" fill="#c82838"/></svg>
<div class="a" style="left:50px;top:388px;width:60px;height:3px;overflow:hidden"><div class="a" style="left:0;top:-8.5px;font-size:10.5px;line-height:12px;color:#555;white-space:nowrap">Opener 20</div></div>
<div class="a" style="left:127px;top:388px;width:60px;height:3px;overflow:hidden"><div class="a" style="left:0;top:-8.5px;font-size:10.5px;line-height:12px;color:#555;white-space:nowrap">IMG_4918</div></div>
<div class="a" style="left:305px;top:388px;width:60px;height:3px;overflow:hidden"><div class="a" style="left:0;top:-8.5px;font-size:10.5px;line-height:12px;color:#555;white-space:nowrap">IMG_4919</div></div>
<div class="a" style="left:407px;top:388px;width:60px;height:3px;overflow:hidden"><div class="a" style="left:0;top:-8.5px;font-size:10.5px;line-height:12px;color:#555;white-space:nowrap">IMG_4920</div></div>
<div class="a" style="left:44px;top:386px;width:634px;height:2px;background:#f0221c"></div>
<div class="aclip" style="left:44.5px;top:496px;width:76px;height:20.5px;background:#efefef;border-color:#a0a0a0"></div>
<div class="a" style="left:50.5px;top:494px;font-family:'Liberation Serif',serif;font-weight:bold;font-size:22px;line-height:22px;color:#111;transform:scaleX(1.1);transform-origin:0 0">T</div>
<div class="a" style="left:73px;top:500px;font-size:10px;line-height:12px;color:#223">Opener...</div>
<div class="aclip" style="left:121.7px;top:521px;width:175.8px;height:20.5px"><svg style="left:0;top:8px" width="175.8" height="11"><polygon points="0,11 0.0,10.3 1.5,7.7 3.0,8.2 4.5,10.1 6.0,9.5 7.5,9.7 9.0,8.8 10.5,8.1 12.0,10.3 13.5,10.3 15.0,7.7 16.5,9.7 18.0,8.2 19.5,10.3 21.0,9.7 22.5,8.5 24.0,10.2 25.5,6.9 27.0,7.3 28.5,10.3 30.0,10.3 31.5,9.3 33.0,7.0 34.5,9.9 36.0,10.2 37.5,9.8 39.0,10.3 40.5,10.2 42.0,9.7 43.5,9.5 45.0,10.2 46.5,10.2 48.0,10.2 49.5,9.6 51.0,10.1 52.5,10.3 54.0,7.7 55.5,9.3 57.0,8.9 58.5,10.2 60.0,6.6 61.5,7.6 63.0,10.3 64.5,10.0 66.0,8.5 67.5,8.5 69.0,7.0 70.5,9.8 72.0,7.8 73.5,8.7 75.0,10.1 76.5,9.1 78.0,7.4 79.5,7.7 81.0,9.5 82.5,9.1 84.0,10.3 85.5,10.2 87.0,8.0 88.5,9.8 90.0,10.3 91.5,9.3 93.0,8.6 94.5,8.7 96.0,9.9 97.5,9.7 99.0,9.5 100.5,8.1 102.0,9.4 103.5,9.8 105.0,9.5 106.5,10.3 108.0,10.3 109.5,8.6 111.0,6.6 112.5,9.1 114.0,9.8 115.5,10.3 117.0,9.5 118.5,6.6 120.0,8.2 121.5,9.3 123.0,7.6 124.5,10.2 126.0,9.5 127.5,6.9 129.0,9.2 130.5,9.6 132.0,10.1 133.5,9.3 135.0,6.8 136.5,10.3 138.0,8.1 139.5,7.8 141.0,7.4 142.5,8.4 144.0,7.9 145.5,9.4 147.0,9.3 148.5,9.8 150.0,10.3 151.5,7.5 153.0,9.2 154.5,10.2 156.0,9.5 157.5,9.6 159.0,9.9 160.5,10.0 162.0,9.4 163.5,9.0 165.0,9.0 166.5,9.6 168.0,10.3 169.5,10.2 171.0,10.3 172.5,9.2 174.0,7.6 175.5,8.0 175.8,11" fill="#a9b1b8"/></svg></div>
<svg style="left:124.7px;top:522px" width="20" height="19"><path d="M2 1 L2 7 M-1 4 L5 4" stroke="#111" stroke-width="1" transform="translate(1,0)"/><path d="M6 5.5 L15.5 4 L15.5 14.5" fill="none" stroke="#111" stroke-width="1.7"/><path d="M6 5.5 L6 16" stroke="#111" stroke-width="1.7"/><ellipse cx="4" cy="16" rx="2.6" ry="2" fill="#111"/><ellipse cx="13.5" cy="14.6" rx="2.6" ry="2" fill="#111"/></svg>
<div class="a" style="left:149.7px;top:525px;font-size:10.5px;line-height:12px;color:#222">IMG_4918</div>
<div class="aclip" style="left:299.6px;top:521px;width:99.8px;height:20.5px"><svg style="left:0;top:8px" width="99.79999999999995" height="11"><polygon points="0,11 0.0,6.9 1.5,6.9 3.0,10.3 4.5,10.3 6.0,7.7 7.5,8.4 9.0,8.7 10.5,10.1 12.0,9.1 13.5,9.1 15.0,9.2 16.5,10.3 18.0,9.7 19.5,9.8 21.0,8.5 22.5,6.5 24.0,6.9 25.5,9.3 27.0,9.7 28.5,10.1 30.0,10.3 31.5,10.3 33.0,9.6 34.5,10.0 36.0,9.9 37.5,7.3 39.0,9.4 40.5,9.3 42.0,10.2 43.5,10.3 45.0,10.0 46.5,10.3 48.0,9.5 49.5,6.5 51.0,8.7 52.5,10.2 54.0,7.3 55.5,8.0 57.0,8.4 58.5,7.2 60.0,8.2 61.5,8.0 63.0,9.9 64.5,6.6 66.0,6.8 67.5,10.3 69.0,8.3 70.5,8.5 72.0,9.6 73.5,9.4 75.0,9.5 76.5,7.1 78.0,9.5 79.5,7.8 81.0,9.9 82.5,7.4 84.0,7.3 85.5,9.6 87.0,9.2 88.5,7.1 90.0,8.4 91.5,9.6 93.0,10.2 94.5,10.0 96.0,8.6 97.5,10.3 99.0,7.2 99.79999999999995,11" fill="#a9b1b8"/></svg></div>
<svg style="left:302.6px;top:522px" width="20" height="19"><path d="M2 1 L2 7 M-1 4 L5 4" stroke="#111" stroke-width="1" transform="translate(1,0)"/><path d="M6 5.5 L15.5 4 L15.5 14.5" fill="none" stroke="#111" stroke-width="1.7"/><path d="M6 5.5 L6 16" stroke="#111" stroke-width="1.7"/><ellipse cx="4" cy="16" rx="2.6" ry="2" fill="#111"/><ellipse cx="13.5" cy="14.6" rx="2.6" ry="2" fill="#111"/></svg>
<div class="a" style="left:327.6px;top:525px;font-size:10.5px;line-height:12px;color:#222">IMG_4919</div>
<div class="aclip" style="left:402px;top:521px;width:198.0px;height:20.5px"><svg style="left:0;top:8px" width="198" height="11"><polygon points="0,11 0.0,10.2 1.5,9.3 3.0,9.9 4.5,9.1 6.0,9.0 7.5,10.3 9.0,10.3 10.5,7.7 12.0,10.1 13.5,10.2 15.0,6.5 16.5,9.6 18.0,7.7 19.5,9.6 21.0,8.9 22.5,10.3 24.0,8.9 25.5,7.5 27.0,9.4 28.5,8.3 30.0,8.7 31.5,10.3 33.0,8.2 34.5,9.1 36.0,10.1 37.5,10.3 39.0,7.5 40.5,9.6 42.0,8.5 43.5,7.4 45.0,8.5 46.5,7.1 48.0,9.8 49.5,8.0 51.0,9.7 52.5,7.0 54.0,7.4 55.5,10.3 57.0,10.3 58.5,10.2 60.0,6.8 61.5,9.7 63.0,9.0 64.5,10.1 66.0,9.5 67.5,9.9 69.0,10.0 70.5,9.2 72.0,9.2 73.5,7.3 75.0,8.7 76.5,7.1 78.0,7.6 79.5,6.6 81.0,8.7 82.5,10.3 84.0,7.6 85.5,6.8 87.0,7.3 88.5,9.2 90.0,8.5 91.5,10.2 93.0,7.8 94.5,9.2 96.0,10.1 97.5,10.3 99.0,7.6 100.5,6.6 102.0,10.3 103.5,8.0 105.0,9.8 106.5,10.3 108.0,10.1 109.5,8.2 111.0,7.5 112.5,10.3 114.0,9.0 115.5,10.3 117.0,8.5 118.5,10.0 120.0,7.4 121.5,6.7 123.0,9.5 124.5,6.5 126.0,10.0 127.5,10.3 129.0,9.1 130.5,10.3 132.0,10.2 133.5,9.8 135.0,9.0 136.5,10.3 138.0,10.3 139.5,7.5 141.0,10.0 142.5,6.8 144.0,7.3 145.5,9.9 147.0,9.6 148.5,9.4 150.0,8.9 151.5,9.1 153.0,9.3 154.5,9.0 156.0,7.0 157.5,9.5 159.0,9.7 160.5,8.5 162.0,10.2 163.5,10.1 165.0,6.7 166.5,9.4 168.0,9.3 169.5,10.3 171.0,9.8 172.5,9.2 174.0,10.3 175.5,9.0 177.0,8.9 178.5,10.3 180.0,9.0 181.5,9.6 183.0,8.7 184.5,10.0 186.0,8.5 187.5,8.4 189.0,10.3 190.5,10.3 192.0,8.7 193.5,6.8 195.0,10.2 196.5,9.7 198.0,9.1 198,11" fill="#a9b1b8"/></svg></div>
<svg style="left:405px;top:522px" width="20" height="19"><path d="M2 1 L2 7 M-1 4 L5 4" stroke="#111" stroke-width="1" transform="translate(1,0)"/><path d="M6 5.5 L15.5 4 L15.5 14.5" fill="none" stroke="#111" stroke-width="1.7"/><path d="M6 5.5 L6 16" stroke="#111" stroke-width="1.7"/><ellipse cx="4" cy="16" rx="2.6" ry="2" fill="#111"/><ellipse cx="13.5" cy="14.6" rx="2.6" ry="2" fill="#111"/></svg>
<div class="a" style="left:430px;top:525px;font-size:10.5px;line-height:12px;color:#222">IMG_4920</div>
<div class="a" style="left:44.6px;top:572.5px;width:632.1px;height:20px;background:#4cb8c6;border:1px solid #3a8e98;border-radius:2px;overflow:hidden"><svg style="left:0;top:0" width="632.1" height="20"><polygon points="0,18 0.0,12.2 1.5,11.0 3.0,5.0 4.5,12.0 6.0,11.6 7.5,10.7 9.0,13.8 10.5,11.6 12.0,10.1 13.5,7.6 15.0,14.0 16.5,13.3 18.0,14.0 19.5,7.3 21.0,9.2 22.5,14.0 24.0,3.7 25.5,4.1 27.0,9.8 28.5,10.3 30.0,13.9 31.5,14.0 33.0,11.4 34.5,14.0 36.0,13.8 37.5,13.6 39.0,14.0 40.5,12.0 42.0,12.3 43.5,6.6 45.0,11.5 46.5,10.0 48.0,11.7 49.5,9.7 51.0,12.1 52.5,13.4 54.0,3.3 55.5,3.3 57.0,6.7 58.5,9.0 60.0,13.2 61.5,13.6 63.0,13.3 64.5,14.0 66.0,8.0 67.5,12.6 69.0,6.6 70.5,12.7 72.0,4.2 73.5,6.5 75.0,14.0 76.5,13.7 78.0,5.3 79.5,12.0 81.0,3.7 82.5,12.6 84.0,14.0 85.5,10.1 87.0,7.8 88.5,13.4 90.0,14.0 91.5,13.1 93.0,4.1 94.5,8.2 96.0,13.9 97.5,13.5 99.0,14.0 100.5,14.0 102.0,7.5 103.5,13.8 105.0,11.0 106.5,12.2 108.0,13.8 109.5,8.6 111.0,13.9 112.5,9.9 114.0,13.9 115.5,12.4 117.0,13.7 118.5,13.4 120.0,3.9 121.5,7.4 123.0,13.3 124.5,5.8 126.0,13.7 127.5,12.6 129.0,6.4 130.5,10.0 132.0,14.0 133.5,3.5 135.0,13.7 136.5,13.5 138.0,7.9 139.5,13.1 141.0,13.3 142.5,14.0 144.0,14.0 145.5,10.7 147.0,13.6 148.5,10.5 150.0,12.8 151.5,12.1 153.0,4.2 154.5,11.9 156.0,10.8 157.5,6.2 159.0,13.8 160.5,13.9 162.0,5.3 163.5,7.1 165.0,13.5 166.5,13.8 168.0,8.5 169.5,4.6 171.0,13.7 172.5,4.4 174.0,5.8 175.5,10.5 177.0,12.4 178.5,14.0 180.0,14.0 181.5,4.1 183.0,13.6 184.5,9.0 186.0,13.5 187.5,7.0 189.0,10.6 190.5,13.3 192.0,13.8 193.5,8.8 195.0,14.0 196.5,13.6 198.0,11.0 199.5,6.4 201.0,10.3 202.5,13.4 204.0,5.1 205.5,13.7 207.0,14.0 208.5,13.4 210.0,12.2 211.5,14.0 213.0,13.8 214.5,12.8 216.0,10.9 217.5,13.9 219.0,12.9 220.5,5.7 222.0,3.7 223.5,9.8 225.0,9.2 226.5,10.7 228.0,13.9 229.5,14.0 231.0,14.0 232.5,5.3 234.0,9.1 235.5,4.1 237.0,14.0 238.5,10.0 240.0,11.9 241.5,8.6 243.0,13.2 244.5,3.3 246.0,14.0 247.5,11.2 249.0,8.5 250.5,5.5 252.0,8.5 253.5,9.1 255.0,7.6 256.5,5.2 258.0,13.0 259.5,9.3 261.0,5.5 262.5,6.1 264.0,12.5 265.5,7.6 267.0,6.2 268.5,10.9 270.0,10.2 271.5,12.7 273.0,10.7 274.5,10.4 276.0,14.0 277.5,10.0 279.0,3.4 280.5,5.9 282.0,8.7 283.5,12.7 285.0,8.6 286.5,10.8 288.0,12.3 289.5,6.7 291.0,14.0 292.5,8.3 294.0,14.0 295.5,10.5 297.0,11.9 298.5,13.6 300.0,9.1 301.5,11.7 303.0,10.3 304.5,5.0 306.0,13.5 307.5,14.0 309.0,13.3 310.5,9.4 312.0,13.7 313.5,13.8 315.0,5.4 316.5,9.7 318.0,12.2 319.5,5.6 321.0,13.1 322.5,9.6 324.0,13.7 325.5,12.3 327.0,7.3 328.5,5.2 330.0,5.9 331.5,12.7 333.0,10.7 334.5,13.2 336.0,13.9 337.5,11.7 339.0,6.7 340.5,6.5 342.0,8.9 343.5,4.4 345.0,13.4 346.5,13.8 348.0,12.2 349.5,13.4 351.0,13.7 352.5,12.5 354.0,10.2 355.5,11.8 357.0,13.2 358.5,6.7 360.0,3.7 361.5,12.2 363.0,14.0 364.5,14.0 366.0,6.0 367.5,14.0 369.0,9.0 370.5,10.9 372.0,13.2 373.5,7.6 375.0,14.0 376.5,13.9 378.0,12.1 379.5,14.0 381.0,6.9 382.5,13.6 384.0,13.9 385.5,14.0 387.0,10.1 388.5,12.2 390.0,10.1 391.5,9.8 393.0,7.3 394.5,4.2 396.0,9.3 397.5,13.7 399.0,11.9 400.5,13.8 402.0,14.0 403.5,12.0 405.0,8.9 406.5,13.8 408.0,13.4 409.5,13.0 411.0,9.2 412.5,11.5 414.0,10.3 415.5,8.2 417.0,12.7 418.5,7.6 420.0,5.3 421.5,14.0 423.0,4.8 424.5,8.8 426.0,13.9 427.5,12.1 429.0,10.2 430.5,5.3 432.0,12.8 433.5,10.9 435.0,5.9 436.5,7.5 438.0,4.5 439.5,12.0 441.0,9.8 442.5,13.7 444.0,8.8 445.5,7.1 447.0,10.0 448.5,8.8 450.0,13.7 451.5,5.5 453.0,3.7 454.5,3.8 456.0,11.3 457.5,7.6 459.0,13.2 460.5,5.3 462.0,6.4 463.5,13.0 465.0,14.0 466.5,12.3 468.0,11.1 469.5,8.0 471.0,11.8 472.5,14.0 474.0,7.3 475.5,14.0 477.0,7.4 478.5,13.8 480.0,13.1 481.5,7.6 483.0,13.9 484.5,13.9 486.0,11.5 487.5,8.7 489.0,6.7 490.5,9.3 492.0,4.5 493.5,11.8 495.0,4.4 496.5,14.0 498.0,13.6 499.5,11.4 501.0,13.3 502.5,8.7 504.0,10.0 505.5,11.4 507.0,6.6 508.5,11.0 510.0,13.2 511.5,12.7 513.0,6.6 514.5,5.5 516.0,13.7 517.5,6.5 519.0,4.0 520.5,11.4 522.0,10.9 523.5,13.7 525.0,11.3 526.5,11.7 528.0,10.5 529.5,14.0 531.0,4.0 532.5,11.5 534.0,12.6 535.5,7.4 537.0,11.0 538.5,11.8 540.0,9.3 541.5,14.0 543.0,11.3 544.5,12.5 546.0,4.2 547.5,5.0 549.0,13.4 550.5,12.0 552.0,13.9 553.5,12.3 555.0,7.1 556.5,5.5 558.0,11.9 559.5,13.2 561.0,13.8 562.5,10.3 564.0,4.9 565.5,13.9 567.0,7.8 568.5,14.0 570.0,13.7 571.5,13.6 573.0,9.3 574.5,13.1 576.0,12.9 577.5,10.3 579.0,14.0 580.5,8.6 582.0,13.9 583.5,11.6 585.0,13.5 586.5,13.7 588.0,11.4 589.5,12.3 591.0,12.8 592.5,12.5 594.0,11.4 595.5,13.8 597.0,13.7 598.5,10.1 600.0,10.0 601.5,11.4 603.0,6.5 604.5,10.4 606.0,6.4 607.5,13.6 609.0,8.5 610.5,7.2 612.0,5.4 613.5,13.2 615.0,13.2 616.5,5.0 618.0,13.7 619.5,3.3 621.0,5.7 622.5,13.9 624.0,13.6 625.5,8.7 627.0,13.5 628.5,14.0 630.0,6.8 631.5,12.4 632.1,18" fill="#5f9299"/></svg></div>
<svg style="left:47px;top:573px" width="24" height="19"><path d="M7 4.5 L18.5 3 L18.5 14.5" fill="none" stroke="#111" stroke-width="1.8"/><path d="M7 4.5 L7 16" stroke="#111" stroke-width="1.8"/><ellipse cx="4.6" cy="16" rx="3" ry="2.3" fill="#333"/><ellipse cx="16" cy="14.6" rx="3" ry="2.3" fill="#333"/></svg>
<div class="a" style="left:73px;top:576px;font-size:10.7px;line-height:12px;color:#111">Name of the Child - Motions</div>
<div class="a" style="left:678px;top:386px;width:1px;height:209px;background:#e03030"></div>
<div class="a" style="left:1px;top:610px;width:1021px;height:18px;background:#fcfcfc;border-top:1px solid #d8d8d8"></div>
<svg style="left:23px;top:612px" width="18" height="15"><path d="M5 3 L13 3 L9 7.2Z" fill="#45a9b3"/><path d="M1.5 8 L1.5 12.5 L16.5 12.5 L16.5 8" fill="none" stroke="#45a9b3" stroke-width="1"/><g stroke="#45a9b3" stroke-width="0.8"><line x1="5" y1="10" x2="5" y2="12.5"/><line x1="9" y1="10" x2="9" y2="12.5"/><line x1="13" y1="10" x2="13" y2="12.5"/></g></svg>
<div class="a" style="left:46px;top:612px;width:1px;height:16px;background:#c8c8c8"></div>
<svg style="left:52px;top:616px" width="18" height="11"><g fill="none" stroke="#333" stroke-width="0.9"><rect x="0.5" y="0.5" width="3.5" height="3"/><rect x="6" y="0.5" width="3.5" height="3"/><rect x="11.5" y="0.5" width="3.5" height="3"/><rect x="0.5" y="6" width="3.5" height="3"/><rect x="6" y="6" width="3.5" height="3"/></g></svg>
<div class="a" style="left:477px;top:613px;font-size:10px;line-height:12px;color:#333">トータル時間:00:00:40:24</div>
<svg style="left:829px;top:613px" width="10" height="15"><rect x="1.5" y="1" width="6" height="6" rx="2" fill="none" stroke="#222" stroke-width="1.1"/><rect x="1.5" y="7.5" width="6" height="6" rx="2" fill="none" stroke="#222" stroke-width="1.1"/><line x1="4.5" y1="4" x2="4.5" y2="10.5" stroke="#222" stroke-width="1.1"/></svg>
<div class="a" style="left:855px;top:619.5px;width:6.5px;height:1px;background:#333"></div>
<div class="a" style="left:869px;top:617px;width:50px;height:2px;background:#111"></div>
<div class="a" style="left:919px;top:617.5px;width:32px;height:1.5px;background:#999"></div>
<div class="a" style="left:917px;top:614px;width:3.5px;height:7.5px;border-radius:1.5px;background:#111"></div>
<div class="a" style="left:958px;top:612px;font-size:13px;line-height:14px;color:#222">+</div>
<div class="a" style="left:974px;top:613px;width:1px;height:14px;background:#bbb"></div>
<svg style="left:981px;top:614px" width="17" height="10"><path d="M2 5 L15 5 M5 2 L1.5 5 L5 8 M12 2 L15.5 5 L12 8" fill="none" stroke="#222" stroke-width="1.1"/></svg>
<svg style="left:1011px;top:616px" width="11" height="11"><g stroke="#bbb" stroke-width="0.8"><line x1="10" y1="2" x2="2" y2="10"/><line x1="10" y1="5" x2="5" y2="10"/><line x1="10" y1="8" x2="8" y2="10"/></g></svg>
<div class="a" style="left:565px;top:148px;width:375px;height:405px;border-radius:5px;background:#ececec;box-shadow:0 0 0 0.5px rgba(0,0,0,0.25),0 2px 6px rgba(0,0,0,0.12),0 12px 30px rgba(0,0,0,0.38)"></div>
<div class="a" style="left:565px;top:148px;width:375px;height:20px;border-radius:5px 5px 0 0;background:linear-gradient(#ebebeb,#d4d4d4);border-bottom:1px solid #bdbdbd"></div>
<div class="a" style="left:571.5px;top:152px;width:11px;height:11px;border-radius:50%;background:#fc605b;box-shadow:inset 0 0 0 0.5px #de4a44"></div>
<div class="a" style="left:589.5px;top:152px;width:11px;height:11px;border-radius:50%;background:#d6d6d6;box-shadow:inset 0 0 0 0.8px #c0c0c0"></div>
<div class="a" style="left:607.5px;top:152px;width:11px;height:11px;border-radius:50%;background:#d6d6d6;box-shadow:inset 0 0 0 0.8px #c0c0c0"></div>
<div class="a" style="left:692px;top:151px;font-size:10.6px;line-height:14px;color:#3a3a3a">オーディオインスペクタ</div>
<div class="dl" style="left:600px;width:87px;top:201px">ピッチ:</div>
<div class="a" style="left:709px;top:207.0px;width:108px;height:3px;border-radius:2px;background:#dcd8d6"></div><div class="a" style="left:709px;top:207.0px;width:54.5px;height:3px;border-radius:2px;background:#d33a2c"></div><div class="a" style="left:761.0px;top:203.0px;width:5px;height:11px;border-radius:2px;background:#333"></div>
<div class="dv" style="left:856px;top:202px">0</div>
<div class="a" style="left:627px;top:229px;width:253px;height:1px;background:#dadada"></div>
<div class="dl" style="left:600px;width:87px;top:244px">フェードイン:</div>
<div class="a" style="left:709px;top:249.0px;width:108px;height:3px;border-radius:2px;background:#dcd8d6"></div><div class="a" style="left:708.0px;top:245.0px;width:5px;height:11px;border-radius:2px;background:#333"></div>
<div class="dv" style="left:855px;top:244px">0.0s</div>
<div class="dl" style="left:600px;width:87px;top:271.5px">フェードアウト:</div>
<div class="a" style="left:709px;top:276.5px;width:108px;height:3px;border-radius:2px;background:#dcd8d6"></div><div class="a" style="left:708.0px;top:272.5px;width:5px;height:11px;border-radius:2px;background:#333"></div>
<div class="dv" style="left:855.5px;top:272px">0.0s</div>
<div class="a" style="left:627px;top:304px;width:253px;height:1px;background:#dadada"></div>
<div class="dl" style="left:600px;width:87px;top:319px">音量:</div>
<svg style="left:693px;top:320px" width="10" height="10"><path d="M1 3.5 L3.5 3.5 L6.5 1 L6.5 9 L3.5 6.5 L1 6.5Z" fill="#555"/><path d="M8 3.5 Q9 5 8 6.5" stroke="#555" stroke-width="0.8" fill="none"/></svg>
<div class="a" style="left:709px;top:324.0px;width:108px;height:3px;border-radius:2px;background:#dcd8d6"></div><div class="a" style="left:709px;top:324.0px;width:35px;height:3px;border-radius:2px;background:#d33a2c"></div><div class="a" style="left:741.5px;top:320.0px;width:5px;height:11px;border-radius:2px;background:#333"></div>
<svg style="left:829px;top:319px" width="13" height="12"><path d="M1 4 L3.5 4 L6.5 1.5 L6.5 10 L3.5 7.5 L1 7.5Z" fill="#555"/><path d="M8 4 Q9.2 5.8 8 7.5 M9.5 3 Q11.5 5.8 9.5 8.5" stroke="#555" stroke-width="0.9" fill="none"/></svg>
<div class="dv" style="left:851px;top:319px">65</div>
<div class="dl" style="left:600px;width:87px;top:348px">スピード:</div>
<svg style="left:688px;top:343px" width="20" height="20"><path d="M4 14.6 L5.5 13.8 Q5.5 7.2 10 7.2 Q13.5 7.2 13.8 11.5 L15.1 9.8 L15.4 6.3 L16.1 9.6 L15.8 11.2 Q15 13.6 13.5 14.6Z" fill="#6a6a6a"/></svg>
<div class="a" style="left:707px;top:356.5px;width:117px;height:3px;border-radius:2px;background:#dcd8d6"></div>
<div class="a" style="left:711.8px;top:362px;width:1px;height:2px;background:#777"></div><div class="a" style="left:725.1px;top:362px;width:1px;height:2px;background:#777"></div><div class="a" style="left:738.4px;top:362px;width:1px;height:2px;background:#777"></div><div class="a" style="left:751.7px;top:362px;width:1px;height:2px;background:#777"></div><div class="a" style="left:765.0px;top:362px;width:1px;height:2px;background:#777"></div><div class="a" style="left:778.3px;top:362px;width:1px;height:2px;background:#777"></div><div class="a" style="left:791.6px;top:362px;width:1px;height:2px;background:#777"></div><div class="a" style="left:804.9px;top:362px;width:1px;height:2px;background:#777"></div><div class="a" style="left:818.2px;top:362px;width:1px;height:2px;background:#777"></div>
<svg style="left:762px;top:351px" width="9" height="13"><path d="M0.5 1.5 Q0.5 0.5 1.5 0.5 L7.5 0.5 Q8.5 0.5 8.5 1.5 L8.5 8.5 L4.5 12.5 L0.5 8.5Z" fill="#333"/></svg>
<svg style="left:824px;top:343px" width="20" height="20"><path d="M6 15.6 Q5.6 11 9 10 Q10.8 9.6 11.9 9.2 L11 5.8 L12.5 5.9 L13.9 8.6 L15.2 9.2 L14.9 11 L14.1 12.1 L13.9 16.6 L12.8 16.6 L12.3 15.2 L9.2 16.6Z" fill="#6a6a6a"/></svg>
<div class="dv" style="left:857px;top:349.5px">1.00</div>
<div class="a" style="left:634px;top:383px;width:252px;height:1px;background:#dadada"></div>
<div class="dl" style="left:600px;width:92px;top:398px;font-size:9px">イコライザ：</div>
<div class="a" style="left:709.3px;top:396.6px;width:136.8px;height:18.8px;border-radius:2px;background:#fff;box-shadow:0 0 0 0.5px #b8b8b8,0 1px 1px rgba(0,0,0,0.12)"></div>
<div class="a" style="left:717px;top:399px;font-size:10px;line-height:13px;color:#111">デフォルト</div>
<svg style="left:834px;top:399px" width="8" height="13"><path d="M1 5 L4 2 L7 5 M1 8 L4 11 L7 8" fill="none" stroke="#555" stroke-width="1"/></svg>
<svg style="left:855px;top:399px" width="16" height="16"><g transform="translate(7.6,7.3)"><rect x="-1.5" y="-7" width="3" height="3.5" fill="#333" transform="rotate(0)"/><rect x="-1.5" y="-7" width="3" height="3.5" fill="#333" transform="rotate(45)"/><rect x="-1.5" y="-7" width="3" height="3.5" fill="#333" transform="rotate(90)"/><rect x="-1.5" y="-7" width="3" height="3.5" fill="#333" transform="rotate(135)"/><rect x="-1.5" y="-7" width="3" height="3.5" fill="#333" transform="rotate(180)"/><rect x="-1.5" y="-7" width="3" height="3.5" fill="#333" transform="rotate(225)"/><rect x="-1.5" y="-7" width="3" height="3.5" fill="#333" transform="rotate(270)"/><rect x="-1.5" y="-7" width="3" height="3.5" fill="#333" transform="rotate(315)"/><circle r="4.4" fill="none" stroke="#333" stroke-width="2.6"/></g></svg>
<div class="dl" style="left:600px;width:92px;top:426px;font-size:9px">ノイズの除去：</div>
<div class="a" style="left:709.5px;top:427.5px;width:12.5px;height:12.5px;border-radius:1px;background:#fff;box-shadow:0 0 0 0.5px #d0d0d0"></div>
<div class="a" style="left:725px;top:426px;font-size:10px;line-height:12px;color:#444;white-space:nowrap">バックグラウンドノイズを除去する</div>
<div class="a" style="left:712px;top:455px;width:120px;height:3px;border-radius:2px;background:#dcd8d6"></div>
<div class="a" style="left:771px;top:459.5px;width:1px;height:2px;background:#777"></div>
<div class="a" style="left:826px;top:459.5px;width:1px;height:2px;background:#777"></div>
<svg style="left:712px;top:450px" width="10" height="13"><path d="M0.5 1.5 Q0.5 0.5 1.5 0.5 L7.5 0.5 Q8.5 0.5 8.5 1.5 L8.5 8.5 L4.5 12.5 L0.5 8.5Z" fill="#555"/></svg>
<div class="dv" style="left:707px;top:465px;color:#555">弱い</div>
<div class="dv" style="left:768px;top:465px;color:#555">標準</div>
<div class="dv" style="left:818px;top:465px;color:#555">強い</div>
<div class="a" style="left:634px;top:495.5px;width:252px;height:1px;background:#dadada"></div>
<div class="a" style="left:728.3px;top:514.5px;width:80px;height:19.8px;border-radius:2px;background:#fff;box-shadow:0 0 0 0.5px #b5b5b5,0 1px 1px rgba(0,0,0,0.15)"></div>
<div class="a" style="left:728px;top:518px;width:81px;text-align:center;font-size:10px;line-height:12px;color:#333">リセット</div>
<div class="a" style="left:827px;top:514px;width:82px;height:20.6px;border-radius:3px;background:#46b3bf"></div>
<div class="a" style="left:827px;top:518px;width:82px;text-align:center;font-size:11.5px;line-height:13px;color:#fff;-webkit-text-stroke:0.05px #fff">OK</div>
</body></html>
